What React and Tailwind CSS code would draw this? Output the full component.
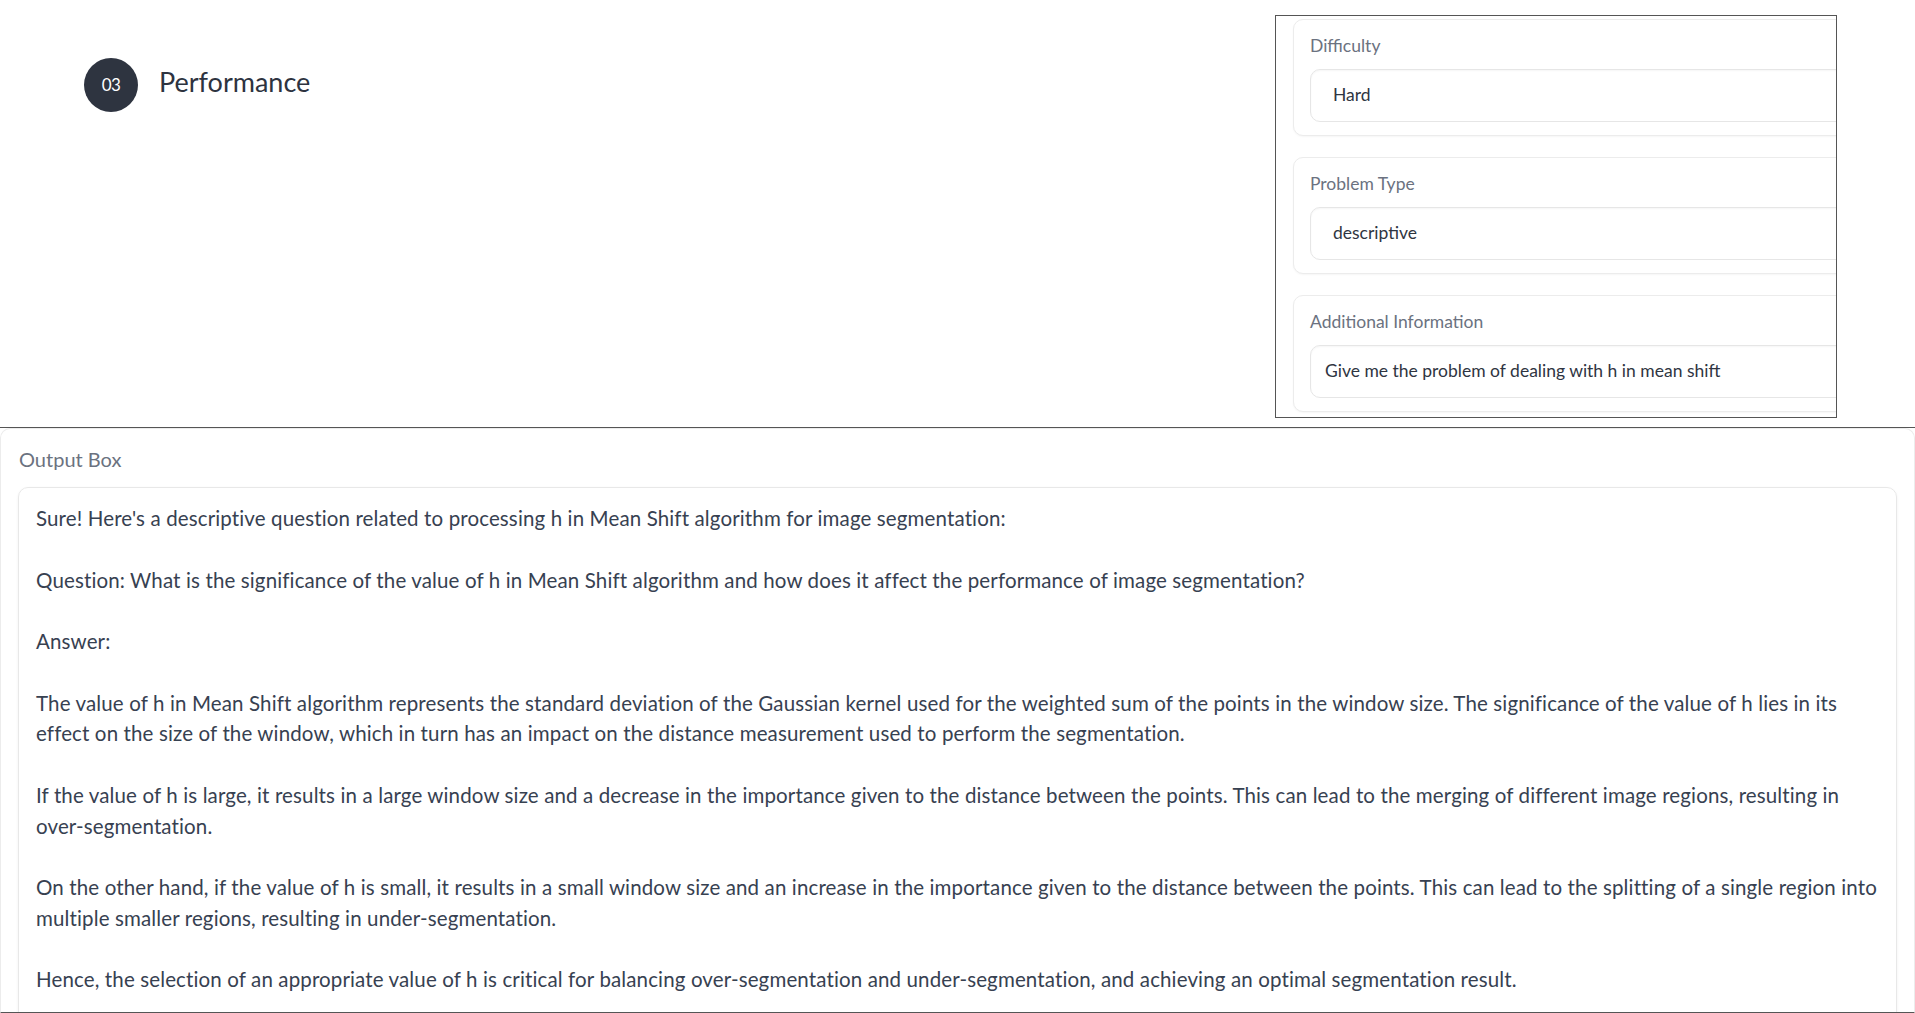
import React from "react";

const text = [
  "Sure! Here's a descriptive question related to processing h in Mean Shift algorithm for image segmentation:",
  "",
  "Question: What is the significance of the value of h in Mean Shift algorithm and how does it affect the performance of image segmentation?",
  "",
  "Answer:",
  "",
  "The value of h in Mean Shift algorithm represents the standard deviation of the Gaussian kernel used for the weighted sum of the points in the window size. The significance of the value of h lies in its",
  "effect on the size of the window, which in turn has an impact on the distance measurement used to perform the segmentation.",
  "",
  "If the value of h is large, it results in a large window size and a decrease in the importance given to the distance between the points. This can lead to the merging of different image regions, resulting in",
  "over-segmentation.",
  "",
  "On the other hand, if the value of h is small, it results in a small window size and an increase in the importance given to the distance between the points. This can lead to the splitting of a single region into",
  "multiple smaller regions, resulting in under-segmentation.",
  "",
  "Hence, the selection of an appropriate value of h is critical for balancing over-segmentation and under-segmentation, and achieving an optimal segmentation result.",
].join("\n");

function Field({ label, value, textarea }) {
  return (
    <div className="w-[600px] h-[117px] shrink-0 rounded-[10px] border border-[#ececec] bg-white pl-[16px] pt-[13px] shadow-[0_1px_2px_rgba(0,0,0,0.04)]">
      <div className="text-[17.5px] leading-[26px] text-[#6b7280]">{label}</div>
      <div
        className={`mt-[10px] h-[53px] rounded-[10px] border border-[#e6e6e6] bg-white flex items-center shadow-[inset_0_1px_2px_rgba(0,0,0,0.04)] text-[#2f3542] text-[17.5px] ${
          textarea ? "pl-[14px]" : "pl-[22px]"
        }`}
      >
        {value}
      </div>
    </div>
  );
}

export default function App() {
  return (
    <div
      className="w-[1915px] h-[1013px] overflow-hidden bg-white flex flex-col"
      style={{ fontFamily: "Lato, 'Noto Sans', sans-serif" }}
    >
      <div className="h-[428px] shrink-0 border-b border-[#555] flex">
        <div className="pl-[84px] pt-[58px] flex items-start">
          <div className="w-[54px] h-[54px] rounded-full bg-[#2e3440] flex items-center justify-center text-white text-[17px] tracking-[-0.5px]">
            03
          </div>
          <div className="ml-[21px] mt-[4px] text-[27px] leading-[40px] text-[#2d3340]">
            Performance
          </div>
        </div>
        <div className="ml-auto mr-[78px] mt-[15px] w-[562px] h-[403px] border border-[#555] overflow-hidden pl-[17px] pt-[3px] flex flex-col gap-[21px]">
          <Field label="Difficulty" value="Hard" />
          <Field label="Problem Type" value="descriptive" />
          <Field
            label="Additional Information"
            value="Give me the problem of dealing with h in mean shift"
            textarea
          />
        </div>
      </div>
      <div className="flex-1 border-b border-[#555] rounded-t-[10px] border-t border-x border-t-[#ececec] border-x-[#ececec] pt-[16px] overflow-hidden">
        <div className="pl-[18px] text-[20px] leading-[28px] text-[#6b7280]">Output Box</div>
        <div className="ml-[17px] mr-[17px] mt-[14px] h-[600px] rounded-[10px] border border-[#e8e8e8] shadow-[0_1px_3px_rgba(0,0,0,0.06)] pl-[17px] pr-[17px] pt-[15px]">
          <div className="whitespace-pre text-[20.5px] tracking-[0.13px] leading-[30.75px] text-[#374151]">
            {text}
          </div>
        </div>
      </div>
    </div>
  );
}
